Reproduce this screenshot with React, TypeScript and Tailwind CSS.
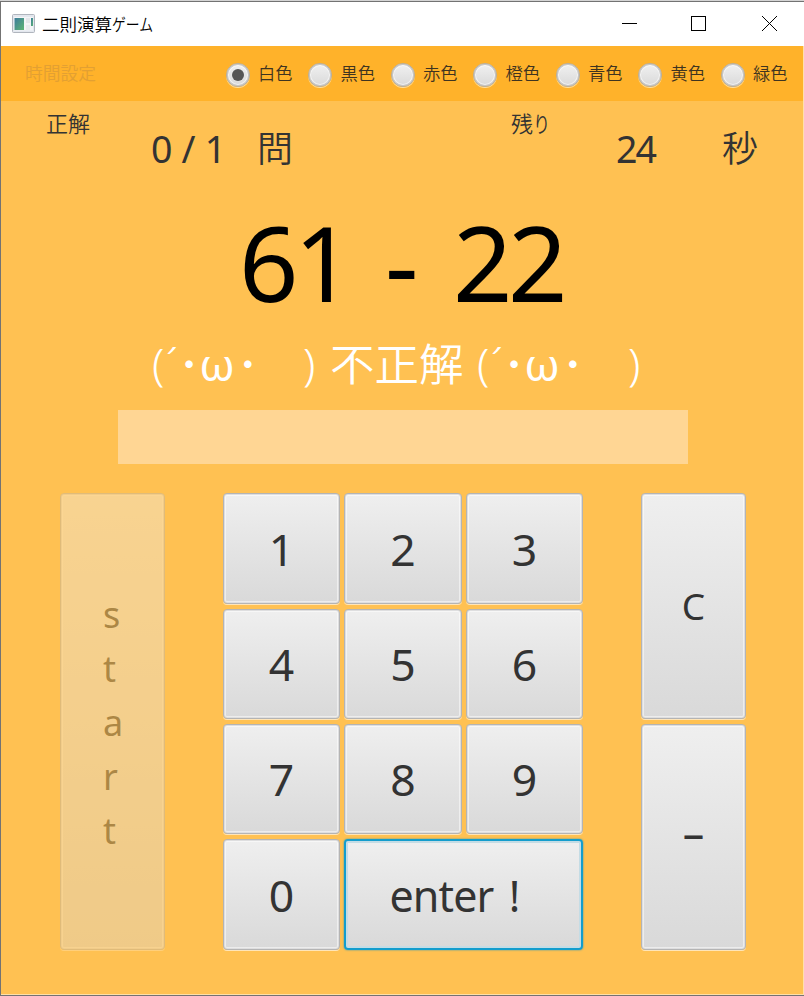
import type { ReactNode } from "react";

const COLORS = ["白色", "黒色", "赤色", "橙色", "青色", "黄色", "緑色"];
const DIGITS = ["1", "2", "3", "4", "5", "6", "7", "8", "9", "0"];

function Key({ children, className = "" }: { children: ReactNode; className?: string }) {
  return (
    <button
      className={`flex items-center justify-center rounded-[4px] border border-[#b4b4b4] bg-linear-to-b from-[#efefef] to-[#d9d9d9] shadow-[0_1px_0_#ffe5b8,inset_0_0_0_1px_#dededf,inset_0_0_0_2px_rgba(255,255,255,0.5)] ${className}`}
    >
      {children}
    </button>
  );
}

function TitleBar() {
  return (
    <header className="flex h-11 shrink-0 items-center bg-white">
      <svg className="ml-[11px] h-5 w-6" viewBox="0 0 24 20">
        <defs>
          <linearGradient id="screen" x1="0" y1="0" x2="1" y2="1">
            <stop offset="0" stopColor="#3c7c9c" />
            <stop offset="1" stopColor="#5eb573" />
          </linearGradient>
        </defs>
        <rect x="0.5" y="0.5" width="22" height="18" rx="1" fill="#e3e7ee" stroke="#b0b5bd" />
        <rect x="2" y="3" width="19" height="13.5" fill="#f4f5f7" />
        <rect x="2.5" y="4" width="9.5" height="12" fill="url(#screen)" />
        <rect x="14" y="4" width="4" height="5" fill="#e4e6ea" />
        <rect x="14" y="11" width="4" height="5" fill="#e9ebee" />
        <rect x="19" y="4" width="2" height="8" fill="url(#screen)" />
      </svg>
      <h1 className="ml-[6px] flex whitespace-nowrap text-[17.5px] leading-5 font-[350] text-black">
        <span>二則演算</span>
        <span className="origin-left scale-x-[0.79]">ゲーム</span>
      </h1>
      <svg className="mr-[26px] ml-auto h-4 w-[157px]" viewBox="0 0 157 16" fill="none" stroke="#000">
        <path d="M1 7.5H16" />
        <rect x="70.5" y="0.5" width="14" height="14" />
        <path d="M141 0L156 15M156 0L141 15" />
      </svg>
    </header>
  );
}

function Toolbar() {
  return (
    <nav className="flex h-[55px] shrink-0 items-center bg-[#ffb22a] text-[17.3px] font-[350]">
      <span className="ml-6 w-[201px] whitespace-nowrap text-[17.8px] text-[#e3a032]">時間設定</span>
      {COLORS.map((name, i) => (
        <label key={name} className="flex w-[82.5px] shrink-0 items-center text-[#3f3420]">
          <span className="mt-[2px] mr-[8.5px] flex size-6 shrink-0 items-center justify-center rounded-full border border-[#b5b0a6] bg-linear-to-b from-[#f1f1f1] to-[#d9d9d9] shadow-[0_1px_0_#ffdf9f,inset_0_0_0_1px_#c9c7c4,inset_0_0_0_2px_rgba(255,255,255,0.6)]">
            {i === 0 && <span className="size-3 rounded-full bg-[#555]" />}
          </span>
          <span className="whitespace-nowrap">{name}</span>
        </label>
      ))}
    </nav>
  );
}

function Kaomoji() {
  return (
    <span className="flex w-[166px] shrink-0">
      <span className="w-[14px]">(</span>
      <span className="w-[14px]">´</span>
      <span className="flex w-[18px] justify-center font-normal">･</span>
      <span className="flex w-[38px] justify-center font-normal">ω</span>
      <span className="flex w-[24px] justify-center font-normal">･</span>
      <span className="ml-auto w-[15px]">)</span>
    </span>
  );
}

export default function App() {
  return (
    <div className="flex h-[996px] w-[804px] flex-col overflow-hidden border-t border-[#d4d4d4] bg-[#ffc152] font-['Noto_Sans','Noto_Sans_CJK_JP',sans-serif] text-[#333]">
      <div className="flex min-h-0 flex-1 flex-col border-t border-b border-l border-[#737373]">
        <TitleBar />
        <div className="flex min-h-0 flex-1 flex-col border-r border-b border-[#ffe0a8]">
          <Toolbar />
          <section className="flex h-[107px] shrink-0 items-start whitespace-nowrap">
            <span className="mt-[7px] ml-[45px] w-[105px] text-[22px] leading-[30px] font-[350]">正解</span>
            <span className="mt-[22px] w-[106px] text-[37.5px] leading-[52px] tracking-[-0.3px]">0 / 1</span>
            <span className="mt-[22px] w-[254px] text-[36px] leading-[52px] font-[350]">問</span>
            <span className="mt-[7px] flex w-[105px] text-[22px] leading-[30px] font-[350]">
              残<span className="origin-left scale-x-[0.78]">り</span>
            </span>
            <span className="mt-[22px] w-[106px] text-[37.5px] leading-[52px] tracking-[-1.9px]">24</span>
            <span className="mt-[22px] text-[36px] leading-[52px] font-[350]">秒</span>
          </section>
          <div className="flex h-[116px] shrink-0 items-center whitespace-nowrap text-[104px] leading-[110px] tracking-[-4.5px] text-black">
            <span className="-mt-[8px] ml-[238px] w-[146px]">61</span>
            <span className="-mt-[6px] w-[68px]">-</span>
            <span className="-mt-[8px]">22</span>
          </div>
          <div className="flex h-[86px] shrink-0 items-start pt-[8px] pl-[151px] whitespace-nowrap text-[44.5px] leading-[64px] font-[350] text-white">
            <Kaomoji />
            <span className="ml-[12px] w-[147px]">不正解</span>
            <Kaomoji />
          </div>
          <div className="ml-[117px] h-[54px] w-[570px] shrink-0 bg-[#ffd694]" />
          <main className="mt-[29px] ml-[59px] flex h-[457px] shrink-0">
            <Key className="w-[105px] opacity-40">
              <span className="mt-[2px] mr-1 flex w-[15px] flex-col items-start text-[36px] leading-[54px]">
                {"start".split("").map((letter, i) => (
                  <span key={i}>{letter}</span>
                ))}
              </span>
            </Key>
            <div className="ml-[58px] grid w-[360px] grid-cols-[117px_118px_117px] grid-rows-[111px_110px_110px_111px] gap-x-1 gap-y-[5px] text-[44.5px] leading-[60px]">
              {DIGITS.map((digit) => (
                <Key key={digit}>
                  <span>{digit}</span>
                </Key>
              ))}
              <Key className="col-span-2 border-2! border-[#139dcd]! shadow-[0_0_2px_#2795b5,inset_0_0_0_2px_#c4dce5]!">
                <span className="mt-[2px] mr-[16px] flex w-[132px] whitespace-nowrap text-[43px]">
                  <span className="tracking-[-0.9px]">enter</span>
                  <span className="ml-auto w-[14px]">!</span>
                </span>
              </Key>
            </div>
            <div className="ml-[58px] grid w-[105px] grid-rows-2 gap-[5px] text-[37px]">
              <Key>C</Key>
              <Key>
                <span className="-mt-[7px] text-[43px]">–</span>
              </Key>
            </div>
          </main>
        </div>
      </div>
    </div>
  );
}
